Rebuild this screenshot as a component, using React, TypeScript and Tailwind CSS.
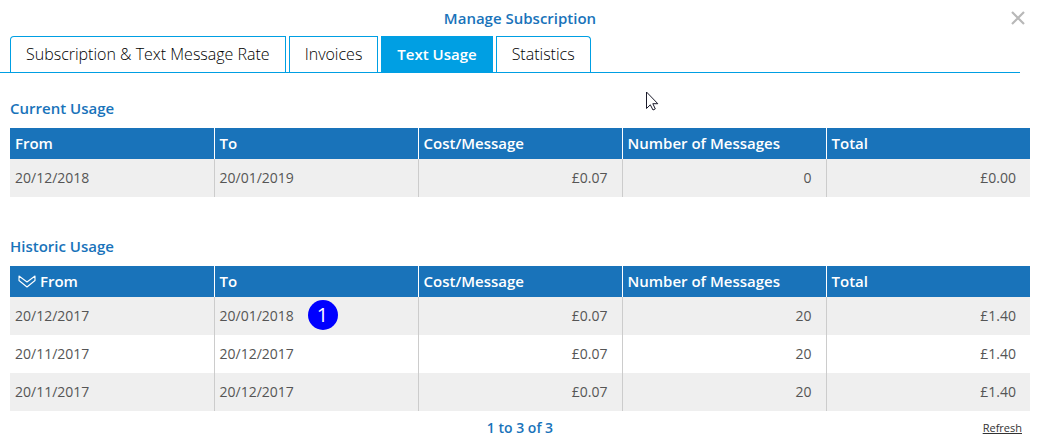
import clsx from 'clsx';

interface UsageRow {
  from: string;
  to: string;
  cost: string;
  messages: number;
  total: string;
  marker?: number;
}

const tabs = ['Subscription & Text Message Rate', 'Invoices', 'Text Usage', 'Statistics'];
const activeTab = 'Text Usage';

const columns = ['From', 'To', 'Cost/Message', 'Number of Messages', 'Total'];

const currentUsage: UsageRow[] = [
  { from: '20/12/2018', to: '20/01/2019', cost: '£0.07', messages: 0, total: '£0.00' },
];

const historicUsage: UsageRow[] = [
  { from: '20/12/2017', to: '20/01/2018', cost: '£0.07', messages: 20, total: '£1.40', marker: 1 },
  { from: '20/11/2017', to: '20/12/2017', cost: '£0.07', messages: 20, total: '£1.40' },
  { from: '20/11/2017', to: '20/12/2017', cost: '£0.07', messages: 20, total: '£1.40' },
];

function SortIcon() {
  return (
    <svg
      viewBox="0 0 18 13"
      className="w-[18px] h-[13px] shrink-0"
      fill="none"
      stroke="currentColor"
      strokeWidth="1.1"
      strokeLinejoin="round"
      aria-hidden="true"
    >
      <path d="M1 1 L9 7 L17 1 V5.5 L9 12 L1 5.5 Z" />
    </svg>
  );
}

function Pointer() {
  return (
    <svg
      viewBox="0 0 13 20"
      className="absolute left-[646px] top-[91px] w-[13px] h-5 pointer-events-none"
      fill="white"
      stroke="#1a1a2a"
      strokeWidth="1"
      aria-hidden="true"
    >
      <path d="M0.5 1 V17.5 L4.3 13.8 L7 19 L9.3 17.9 L6.8 12.7 H11.8 Z" />
    </svg>
  );
}

function UsageTable({ id, title, rows, sorted }: { id: string; title: string; rows: UsageRow[]; sorted?: boolean }) {
  return (
    <section>
      <h2 id={id} className="text-[15px] leading-5 font-semibold text-[#1973ba] mb-2.5">
        {title}
      </h2>
      <table aria-labelledby={id} className="w-full table-fixed border-collapse">
        <thead>
          <tr className="bg-[#1973ba] text-white text-[15px] leading-5 text-left">
            {columns.map((column, i) => (
              <th
                key={column}
                scope="col"
                className={clsx('px-[5px] pt-[5px] pb-1.5 font-semibold', i > 0 && 'border-l border-white')}
              >
                {sorted && i === 0 ? (
                  <button type="button" className="flex items-center gap-1 pl-[3px]">
                    <SortIcon />
                    {column}
                  </button>
                ) : (
                  column
                )}
              </th>
            ))}
          </tr>
        </thead>
        <tbody className="text-sm leading-5 text-[#555]">
          {rows.map((row, i) => (
            <tr key={i} className="odd:bg-[#efefef]">
              <td className="px-[5px] py-[9px]">{row.from}</td>
              <td className="px-[5px] py-[9px] border-l border-[#ccc] relative">
                {row.to}
                {row.marker && (
                  <span className="absolute left-[93px] top-[3px] w-[30px] h-[30px] rounded-full bg-[#0000ff] text-white text-xl flex items-center justify-center">
                    {row.marker}
                  </span>
                )}
              </td>
              <td className="pl-[5px] pr-3.5 py-[9px] border-l border-[#ccc] text-right">{row.cost}</td>
              <td className="pl-[5px] pr-3.5 py-[9px] border-l border-[#ccc] text-right">{row.messages}</td>
              <td className="pl-[5px] pr-3.5 py-[9px] border-l border-[#ccc] text-right">{row.total}</td>
            </tr>
          ))}
        </tbody>
      </table>
    </section>
  );
}

export default function App() {
  return (
    <div className="relative bg-white font-['Open_Sans',sans-serif]">
      {/* Title bar */}
      <header className="grid grid-cols-[1fr_auto_1fr] items-center h-9 px-[15px]">
        <h1 className="col-start-2 text-[15px] leading-5 font-semibold text-[#1973ba]">Manage Subscription</h1>
        <button type="button" aria-label="Close" className="justify-self-end">
          <svg viewBox="0 0 14 14" className="w-3.5 h-3.5" stroke="#b8b8b8" strokeWidth="2.2" aria-hidden="true">
            <path d="M1 1 L13 13 M13 1 L1 13" />
          </svg>
        </button>
      </header>

      {/* Tabs */}
      <div role="tablist" className="flex gap-[3px] pl-2.5 mr-5 border-b border-[#009fe3]">
        {tabs.map((tab) => (
          <button
            key={tab}
            type="button"
            role="tab"
            aria-selected={tab === activeTab}
            className={clsx(
              'px-[15px] py-2 leading-[19px] border border-b-0 border-[#009fe3] first:rounded-tl last:rounded-tr',
              tab === activeTab ? 'bg-[#009fe3] text-white text-[15px] font-semibold' : 'text-base font-light text-black',
            )}
          >
            {tab}
          </button>
        ))}
      </div>

      <main className="px-2.5 pt-[25px] flex flex-col gap-[39px]">
        <UsageTable id="current-usage" title="Current Usage" rows={currentUsage} />
        <UsageTable id="historic-usage" title="Historic Usage" rows={historicUsage} sorted />
      </main>

      <footer className="grid grid-cols-[1fr_auto_1fr] items-center px-[18px] pt-[7px]">
        <p className="col-start-2 text-sm leading-5 font-semibold text-[#1973ba]">1 to 3 of 3</p>
        <a href="#refresh" className="justify-self-end text-[11px] leading-5 text-[#333] underline">
          Refresh
        </a>
      </footer>

      <Pointer />
    </div>
  );
}
